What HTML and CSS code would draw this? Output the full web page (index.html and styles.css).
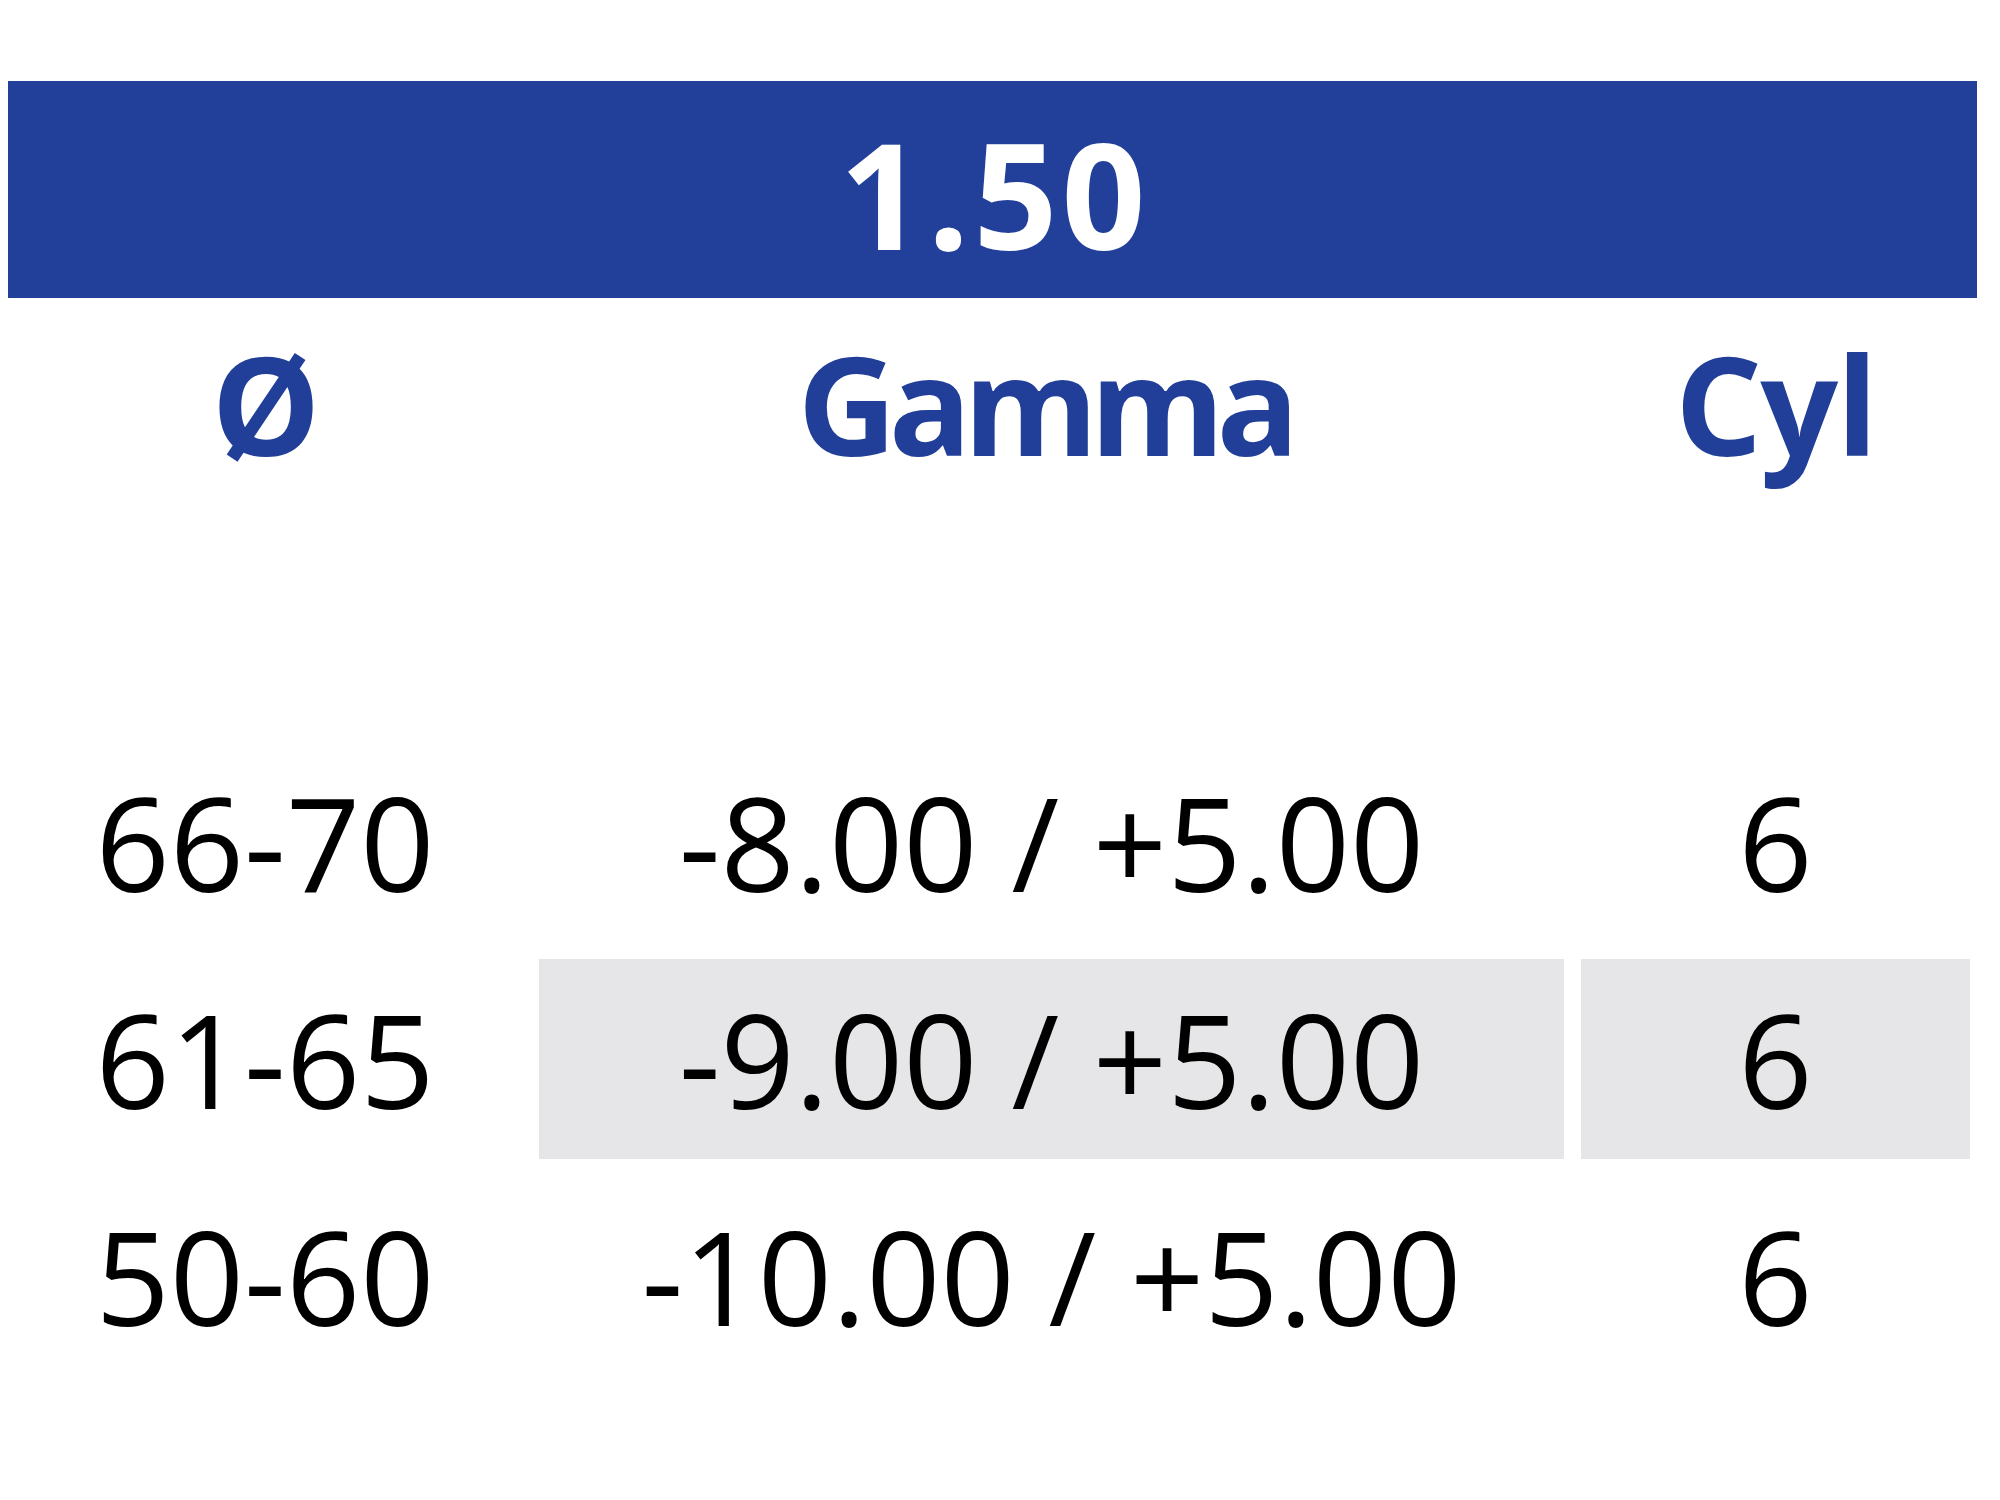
FILE: index.html
```html
<!DOCTYPE html>
<html>
<head>
<meta charset="utf-8">
<link rel="stylesheet" href="styles.css">
</head>
<body>
<div class="page">
  <div class="bar">1.50</div>
  <div class="grid head">
    <div class="cell">Ø</div>
    <div class="cell gamma">Gamma</div>
    <div class="cell">Cyl</div>
  </div>
  <div class="grid rows">
    <div class="cell">66-70</div>
    <div class="cell">-8.00 / +5.00</div>
    <div class="cell">6</div>
    <div class="cell">61-65</div>
    <div class="cell shade">-9.00 / +5.00</div>
    <div class="cell shade">6</div>
    <div class="cell">50-60</div>
    <div class="cell">-10.00 / +5.00</div>
    <div class="cell">6</div>
  </div>
</div>
</body>
</html>
```

FILE: styles.css
```css
html, body {
  margin: 0;
  padding: 0;
  background: #ffffff;
}
.page {
  width: 2000px;
  height: 1500px;
  padding-top: 81px;
  box-sizing: border-box;
  font-family: "Open Sans", "Noto Sans", sans-serif;
}
.bar {
  margin-left: 8px;
  width: 1969px;
  height: 217px;
  box-sizing: border-box;
  padding-top: 8px;
  padding-left: 4px;
  background: #22409a;
  color: #ffffff;
  font-weight: 700;
  font-size: 147px;
  line-height: 209px;
  text-align: center;
  letter-spacing: 4px;
}
.grid {
  display: grid;
  grid-template-columns: 514px 1025px 389px;
  column-gap: 17px;
  margin-left: 8px;
}
.head {
  margin-top: 12px;
  height: 432px;
  color: #213f99;
  font-weight: 700;
  font-size: 137px;
  line-height: 1.362;
  align-items: start;
}
.head .cell {
  text-align: center;
  letter-spacing: -2px;
}
.head .gamma {
  padding-right: 14px;
  letter-spacing: -8px;
}
.rows {
  row-gap: 17px;
  grid-auto-rows: 200px;
  color: #000000;
  font-size: 130px;
  line-height: 200px;
}
.rows .cell {
  text-align: center;
}
.shade {
  background: #e6e6e8;
}
```
